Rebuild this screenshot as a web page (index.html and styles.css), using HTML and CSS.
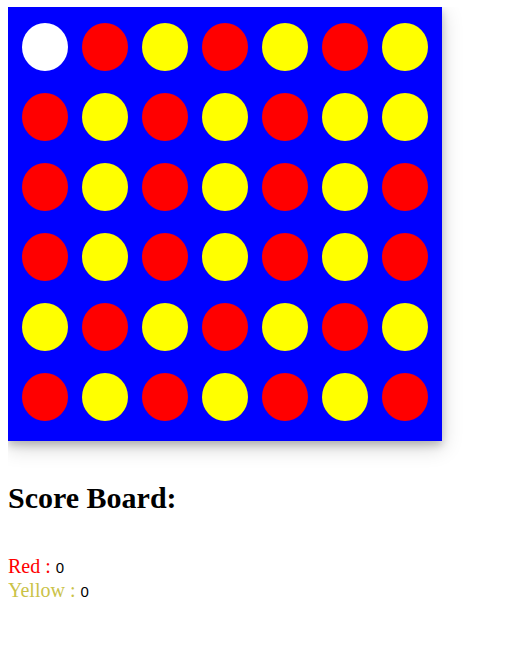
FILE: index.html
```html
<!DOCTYPE html>
<html>
<head>
<meta charset="utf-8">
<link rel="stylesheet" href="styles.css">
</head>
<body>
<div class="board">
  <div class="cell empty"></div><div class="cell red"></div><div class="cell yellow"></div><div class="cell red"></div><div class="cell yellow"></div><div class="cell red"></div><div class="cell yellow"></div>
  <div class="cell red"></div><div class="cell yellow"></div><div class="cell red"></div><div class="cell yellow"></div><div class="cell red"></div><div class="cell yellow"></div><div class="cell yellow"></div>
  <div class="cell red"></div><div class="cell yellow"></div><div class="cell red"></div><div class="cell yellow"></div><div class="cell red"></div><div class="cell yellow"></div><div class="cell red"></div>
  <div class="cell red"></div><div class="cell yellow"></div><div class="cell red"></div><div class="cell yellow"></div><div class="cell red"></div><div class="cell yellow"></div><div class="cell red"></div>
  <div class="cell yellow"></div><div class="cell red"></div><div class="cell yellow"></div><div class="cell red"></div><div class="cell yellow"></div><div class="cell red"></div><div class="cell yellow"></div>
  <div class="cell red"></div><div class="cell yellow"></div><div class="cell red"></div><div class="cell yellow"></div><div class="cell red"></div><div class="cell yellow"></div><div class="cell red"></div>
</div>
<h2 class="title">Score Board:</h2>
<div class="scores">
  <div class="score"><span class="label red-text">Red : </span><span class="num">0</span></div>
  <div class="score"><span class="label yellow-text">Yellow : </span><span class="num">0</span></div>
</div>
</body>
</html>
```
FILE: styles.css
```css
html, body {
  background: #ffffff;
}
body {
  margin: 7px 8px 8px 8px;
  font-family: "Liberation Serif", "Times New Roman", serif;
}
.board {
  width: 434px;
  height: 434px;
  box-sizing: border-box;
  background: #0000ff;
  padding: 16px 14px 20px 14px;
  display: grid;
  grid-template-columns: repeat(7, 46px);
  grid-template-rows: repeat(6, 48px);
  column-gap: 14px;
  row-gap: 22px;
  box-shadow: 0 4px 8px 0 rgba(0,0,0,0.2), 0 6px 20px 0 rgba(0,0,0,0.19);
}
.cell {
  width: 46px;
  height: 48px;
  border-radius: 50%;
}
.empty { background: #ffffff; }
.red { background: #ff0000; }
.yellow { background: #ffff00; }
.title {
  margin: 39px 0 0 0;
  font-size: 30px;
  font-weight: bold;
  line-height: 35px;
  color: #000;
}
.scores {
  margin-top: 40px;
}
.score {
  font-size: 20px;
  line-height: 22px;
}
.red-text { color: #ff0000; }
.yellow-text { color: #cac247; }
.num {
  font-family: "Liberation Sans", Arial, sans-serif;
  font-size: 15px;
  color: #000;
}
```
